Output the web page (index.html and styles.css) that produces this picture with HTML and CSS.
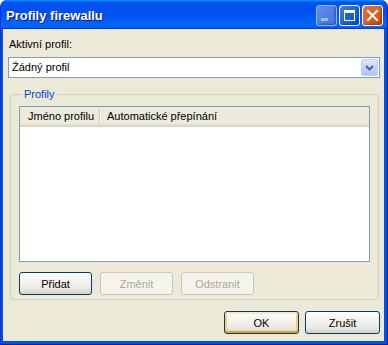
FILE: index.html
```html
<!DOCTYPE html>
<html lang="cs">
<head>
  <meta charset="UTF-8">
  <meta name="viewport" content="width=device-width, initial-scale=1.0">
  <title>Profily firewallu</title>
  <link rel="stylesheet" href="styles.css">
</head>
<body>
  <div class="window">
    <div class="titlebar">
      <span class="title">Profily firewallu</span>
      <div class="controls">
        <span class="ctl ctl-min disabled">
          <svg width="21" height="21" viewBox="0 0 21 21"><rect x="5" y="13" width="7" height="3" fill="#fff" opacity="0.55"/></svg>
        </span>
        <span class="ctl ctl-max">
          <svg width="21" height="21" viewBox="0 0 21 21"><rect x="5.5" y="5.5" width="10" height="10" fill="none" stroke="#fff" stroke-width="1"/><rect x="5" y="5" width="11" height="3" fill="#fff"/></svg>
        </span>
        <span class="ctl ctl-close">
          <svg width="21" height="21" viewBox="0 0 21 21"><path d="M6 6 L15 15 M15 6 L6 15" stroke="#fff" stroke-width="2" stroke-linecap="square"/></svg>
        </span>
      </div>
    </div>

    <div class="dialog">
      <label class="field-label">Aktivní profil:</label>
      <div class="combo">
        <span class="combo-value">Žádný profil</span>
        <span class="combo-btn">
          <svg width="15" height="15" viewBox="0 0 15 15"><path d="M4 6 L7.5 9.5 L11 6" fill="none" stroke="#4d6185" stroke-width="2"/></svg>
        </span>
      </div>

      <fieldset class="group">
        <legend>Profily</legend>
        <div class="listview">
          <div class="lv-header">
            <span class="lv-col lv-col-name">Jméno profilu</span>
            <span class="lv-col lv-col-auto">Automatické přepínání</span>
          </div>
          <div class="lv-body"></div>
        </div>
        <div class="group-buttons">
          <button class="btn btn-small">Přidat</button>
          <button class="btn btn-small" disabled>Změnit</button>
          <button class="btn btn-small" disabled>Odstranit</button>
        </div>
      </fieldset>

      <div class="dialog-buttons">
        <button class="btn btn-default">OK</button>
        <button class="btn">Zrušit</button>
      </div>
    </div>
  </div>
</body>
</html>
```

FILE: styles.css
```css
html, body {
  margin: 0;
  padding: 0;
  background: #fff;
}
body {
  font-family: "Liberation Sans", Arial, sans-serif;
  font-size: 11px;
  color: #000;
}
.window {
  width: 388px;
  height: 345px;
  box-sizing: border-box;
  display: flex;
  flex-direction: column;
  background: #0054e3;
  border-radius: 7px 7px 0 0;
  overflow: hidden;
  border-left: 1px solid #0831d9;
  border-right: 1px solid #001ea0;
  border-bottom: 1px solid #001ea0;
}
.titlebar {
  height: 29px;
  flex: none;
  display: flex;
  align-items: center;
  justify-content: space-between;
  padding: 0 4px 0 5px;
  background: linear-gradient(#0997ff, #0053ee 8%, #0050ee 40%, #0066ff 88%, #0066ff 93%, #005bff 95%, #003dd7 96%, #003dd7);
}
.title {
  font-weight: bold;
  font-size: 13px;
  color: #fff;
  text-shadow: 1px 1px #0f1089;
  margin-top: 1px;
}
.controls {
  display: flex;
  gap: 2px;
  margin-top: 1px;
}
.ctl {
  width: 21px;
  height: 21px;
  box-sizing: border-box;
  border: 1px solid #fff;
  border-radius: 3px;
  display: flex;
  align-items: center;
  justify-content: center;
  overflow: hidden;
  background: radial-gradient(circle at 90% 90%, #0054e9 0%, #2263d5 55%, #4479e4 90%, #fff 100%);
  box-shadow: inset -1px -1px 2px rgba(0, 40, 120, 0.5);
}
.ctl svg {
  flex: none;
  margin: -1px;
}
.ctl.disabled {
  border-color: #a7bff0;
  background: linear-gradient(135deg, #6f96ec, #4a77da);
  opacity: 0.9;
}
.ctl-close {
  background: radial-gradient(circle at 90% 90%, #cc4600 0%, #dc6527 55%, #cd7546 90%, #fff 100%);
  box-shadow: inset -1px -1px 2px rgba(120, 30, 0, 0.5);
}
.dialog {
  flex: 1;
  margin: 0 3px 3px 2px;
  background: #ece9d8;
  padding: 9px 4px 0 5px;
  display: flex;
  flex-direction: column;
}
.field-label {
  display: block;
  height: 13px;
  line-height: 13px;
  margin-bottom: 6px;
  padding-left: 1px;
}
.combo {
  height: 21px;
  box-sizing: border-box;
  border: 1px solid #7f9db9;
  background: #fff;
  display: flex;
  align-items: center;
  justify-content: space-between;
  padding: 0 1px 0 3px;
}
.combo-value {
  line-height: 13px;
}
.combo-btn {
  width: 17px;
  height: 17px;
  box-sizing: border-box;
  border: 1px solid #bad1fc;
  border-radius: 2px;
  background: linear-gradient(#dbe6fe, #c1d3fb 50%, #b1c7f7);
  display: flex;
  align-items: center;
  justify-content: center;
}
.group {
  margin: 10px 1px 0 2px;
  padding: 5px 8px 4px 8px;
  border: 1px solid #d0d0bf;
  border-radius: 3px;
  min-width: 0;
}
.group legend {
  color: #0046d5;
  padding: 0 2px;
  margin-left: 3px;
  line-height: 13px;
}
.listview {
  height: 156px;
  box-sizing: border-box;
  border: 1px solid #7f9db9;
  background: #fff;
  display: flex;
  flex-direction: column;
}
.lv-header {
  height: 19px;
  flex: none;
  display: flex;
  align-items: center;
  background: #ebeadb;
  border-bottom: 1px solid #d6d2c2;
  box-shadow: inset 0 -2px #e2decd, inset 0 -1px #cbc7b8;
}
.lv-col {
  line-height: 13px;
  white-space: nowrap;
}
.lv-col-name {
  width: 71px;
  padding-left: 8px;
  border-right: 1px solid #c7c5b2;
  box-shadow: 1px 0 #fff;
}
.lv-col-auto {
  padding-left: 7px;
}
.lv-body {
  flex: 1;
}
.group-buttons {
  display: flex;
  gap: 8px;
  margin-top: 10px;
}
.btn {
  font-family: inherit;
  font-size: 11px;
  width: 75px;
  height: 23px;
  box-sizing: border-box;
  border: 1px solid #003c74;
  border-radius: 3px;
  background: linear-gradient(#fff, #f6f5f1 30%, #ecebe6 70%, #d6d0c5);
  color: #000;
  padding: 0;
}
.btn-small {
  width: 73px;
}
.btn:disabled {
  border-color: #c9c7ba;
  background: #f5f4ea;
  color: #aca899;
}
.btn-default {
  box-shadow: inset 0 -2px #e5a01a, inset 0 2px #ffe9b5, inset 2px 0 #f9cd6f, inset -2px 0 #f9cd6f;
}
.dialog-buttons {
  display: flex;
  justify-content: flex-end;
  gap: 6px;
  margin-top: 11px;
}
```
